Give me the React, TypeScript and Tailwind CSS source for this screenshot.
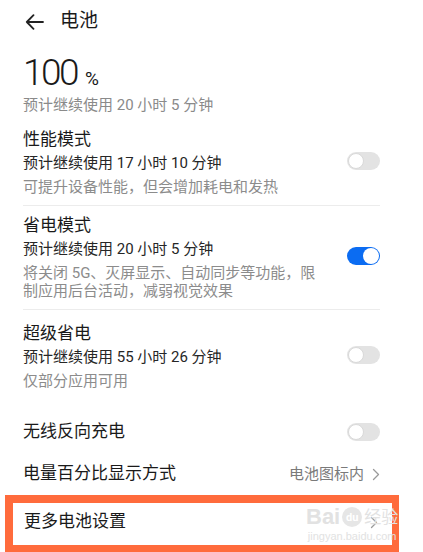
import React from "react";

const font = { fontFamily: '"Roboto", "Noto Sans CJK SC", sans-serif' };

function Toggle({ on = false }: { on?: boolean }) {
  return (
    <div
      className={`relative h-[18px] w-[33px] shrink-0 rounded-full ${
        on ? "bg-[#0b6cf2]" : "bg-[#e3e3e3]"
      }`}
    >
      <div
        className={`absolute top-[1px] h-[16px] w-[16px] rounded-full bg-white ${
          on ? "right-[1px]" : "left-[1px] border border-[#d9d9d9]"
        }`}
      />
    </div>
  );
}

function Chevron() {
  return (
    <svg width="8" height="13" viewBox="0 0 8 13" fill="none" className="ml-[8px]">
      <path d="M1.5 1.5 L6.5 6.5 L1.5 11.5" stroke="#9a9a9a" strokeWidth="1.3" strokeLinecap="round" strokeLinejoin="round" />
    </svg>
  );
}

interface ModeProps {
  title: string;
  sub: string;
  desc: string[];
  on?: boolean;
  pt: string;
  pb: string;
}

function ModeItem({ title, sub, desc, on, pt, pb }: ModeProps) {
  return (
    <div className={`flex items-center justify-between ${pt} ${pb}`}>
      <div className="flex flex-col">
        <div className="text-[17px] leading-[25px] text-[#1a1a1a]">{title}</div>
        <div className="text-[15px] leading-[23px] text-[#262626]">{sub}</div>
        <div className="mt-[2.5px] text-[15px] leading-[18px] text-[#8c8c8c]">
          {desc.map((line, i) => (
            <div key={i}>{line}</div>
          ))}
        </div>
      </div>
      <Toggle on={on} />
    </div>
  );
}

export default function App() {
  return (
    <div className="relative h-[552px] w-[423px] overflow-hidden bg-white" style={font}>
      {/* Header */}
      <div className="flex h-[43px] items-center pl-[25px]">
        <svg width="19" height="16" viewBox="0 0 19 16" fill="none">
          <path d="M18 8 H1.8 M8.5 1.2 L1.8 8 L8.5 14.8" stroke="#222" strokeWidth="1.8" strokeLinecap="round" strokeLinejoin="round" />
        </svg>
        <span className="ml-[16px] text-[19px] text-[#1a1a1a]">电池</span>
      </div>

      <div className="pl-[23px] pr-[43px]">
        {/* Level */}
        <div className="mt-[12px] flex h-[36px] items-baseline text-[#1a1a1a]">
          <span className="text-[37px] font-light leading-[36px] tracking-[-2.5px]">100</span>
          <span className="ml-[8px] text-[19px] leading-[20px]">%</span>
        </div>
        <div className="mt-[4px] text-[15px] leading-[20px] text-[#8a8a8a]">预计继续使用 20 小时 5 分钟</div>

        <ModeItem
          title="性能模式"
          sub="预计继续使用 17 小时 10 分钟"
          desc={["可提升设备性能，但会增加耗电和发热"]}
          pt="pt-[12px]"
          pb="pb-[9.5px]"
        />
        <div className="h-px bg-[#ececec]" />
        <ModeItem
          title="省电模式"
          sub="预计继续使用 20 小时 5 分钟"
          desc={["将关闭 5G、灭屏显示、自动同步等功能，限", "制应用后台活动，减弱视觉效果"]}
          on
          pt="pt-[7px]"
          pb="pb-[9px]"
        />
        <div className="h-px bg-[#ececec]" />
        <ModeItem
          title="超级省电"
          sub="预计继续使用 55 小时 26 分钟"
          desc={["仅部分应用可用"]}
          pt="pt-[11.5px]"
          pb="pb-[19.5px]"
        />

        {/* Other settings */}
        <div className="flex h-[45px] items-center justify-between">
          <span className="text-[17px] text-[#1a1a1a]">无线反向充电</span>
          <Toggle />
        </div>
        <div className="flex h-[41px] items-center justify-between pb-[1px]">
          <span className="text-[17px] text-[#1a1a1a]">电量百分比显示方式</span>
          <div className="flex items-center">
            <span className="text-[15px] text-[#7a7a7a]">电池图标内</span>
            <Chevron />
          </div>
        </div>
      </div>

      {/* Highlighted row */}
      <div className="ml-[5px] mr-[24px] border-[7px] border-t-[8px] border-l-[8px] border-[#ff6b3c]">
        <div className="flex h-[42px] items-center justify-between pb-[4px] pl-[11px] pr-[14px]">
          <span className="text-[17px] text-[#1a1a1a]">更多电池设置</span>
          <Chevron />
        </div>
      </div>

      {/* Watermark */}
      <div className="pointer-events-none absolute left-[306px] top-[506px] flex flex-col items-center text-[#e2e2e2]">
        <div className="flex items-center">
          <span className="font-['Liberation_Sans'] text-[22px] font-bold leading-[22px]">Bai</span>
          <span className="mx-[2px] flex h-[20px] w-[20px] items-center justify-center rounded-full bg-[#e6e6e6] text-[11px] font-bold leading-none text-white">du</span>
          <span className="text-[17px] leading-[22px]">经验</span>
        </div>
        <span className="mt-[2px] font-['Liberation_Sans'] text-[11px] leading-[12px]">jingyan.baidu.com</span>
      </div>
    </div>
  );
}
